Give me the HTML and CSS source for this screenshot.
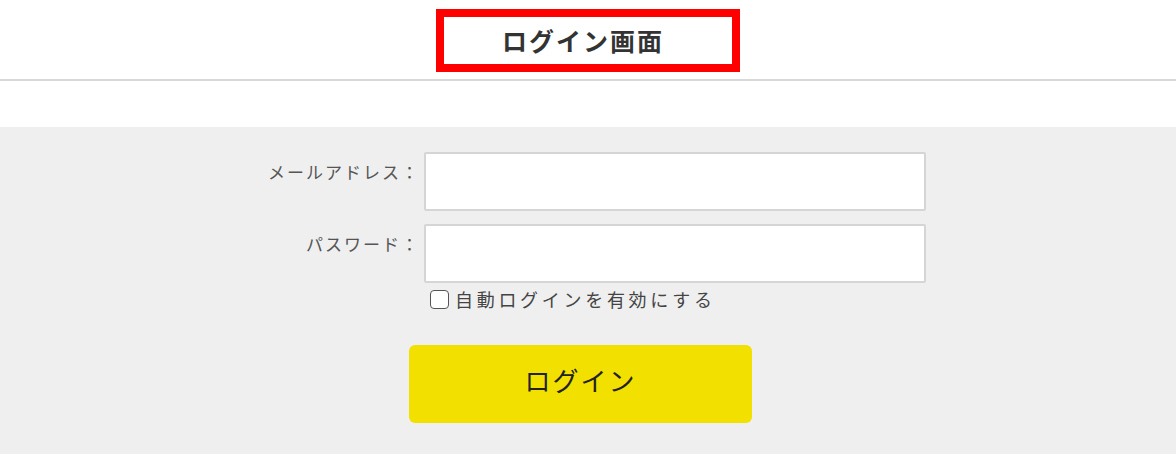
FILE: index.html
```html
<!DOCTYPE html>
<html lang="ja">
<head>
<meta charset="utf-8">
<title>ログイン画面</title>
<link rel="stylesheet" href="styles.css">
</head>
<body>
<header class="header">
  <div class="title-box"><h1 class="title">ログイン画面</h1></div>
</header>
<main class="login">
  <form class="form">
    <label class="label" for="email">メールアドレス：</label>
    <input class="field" id="email" type="text">
    <label class="label" for="pass">パスワード：</label>
    <input class="field" id="pass" type="password">
    <span></span>
    <label class="remember"><input class="check" type="checkbox"><span>自動ログインを有効にする</span></label>
  </form>
  <div class="actions">
    <button class="btn" type="button">ログイン</button>
  </div>
</main>
</body>
</html>
```

FILE: styles.css
```css
* { box-sizing: border-box; }
html, body { margin: 0; padding: 0; background: #fff; }
body {
  font-family: "Noto Sans CJK JP", "Noto Sans", sans-serif;
  color: #333;
}
.header {
  height: 81px;
  border-bottom: 2px solid #d8d8d8;
  display: flex;
  justify-content: center;
  padding-top: 9px;
}
.title-box {
  width: 304px;
  height: 63px;
  border: 8px solid #ff0000;
  display: flex;
  align-items: center;
  justify-content: center;
  padding-right: 10px;
}
.title {
  margin: 0;
  font-size: 25px;
  font-weight: 700;
  letter-spacing: 2px;
  color: #333;
  line-height: 1;
}
.login {
  margin-top: 46px;
  background: #efefef;
  padding: 25px 0 31px;
}
.form {
  display: grid;
  grid-template-columns: 418px 502px;
  column-gap: 6px;
  row-gap: 13px;
}
.label {
  justify-self: end;
  padding-top: 8px;
  font-size: 17px;
  line-height: 24px;
  letter-spacing: 2px;
  margin-right: -2px;
  color: #555;
}
.field {
  height: 59px;
  border: 2px solid #d5d5d5;
  border-radius: 2px;
  background: #fff;
  width: 100%;
  margin: 0;
}
.remember {
  margin-top: -9px;
  display: flex;
  align-items: center;
  gap: 6px;
  padding-left: 6px;
  font-size: 18px;
  line-height: 24px;
  letter-spacing: 3.7px;
  color: #444;
}
.check {
  appearance: none;
  -webkit-appearance: none;
  width: 19px;
  height: 19px;
  margin: 0;
  border: 1.5px solid #555;
  border-radius: 4px;
  background: #fff;
}
.actions {
  display: flex;
  padding-left: 409px;
  margin-top: 34px;
}
.btn {
  width: 343px;
  height: 78px;
  border: none;
  border-radius: 6px;
  background: #f2e000;
  font-family: "Noto Sans CJK JP", "Noto Sans", sans-serif;
  font-size: 26px;
  letter-spacing: 2px;
  color: #222;
  padding: 0 0 10px;
}
```
